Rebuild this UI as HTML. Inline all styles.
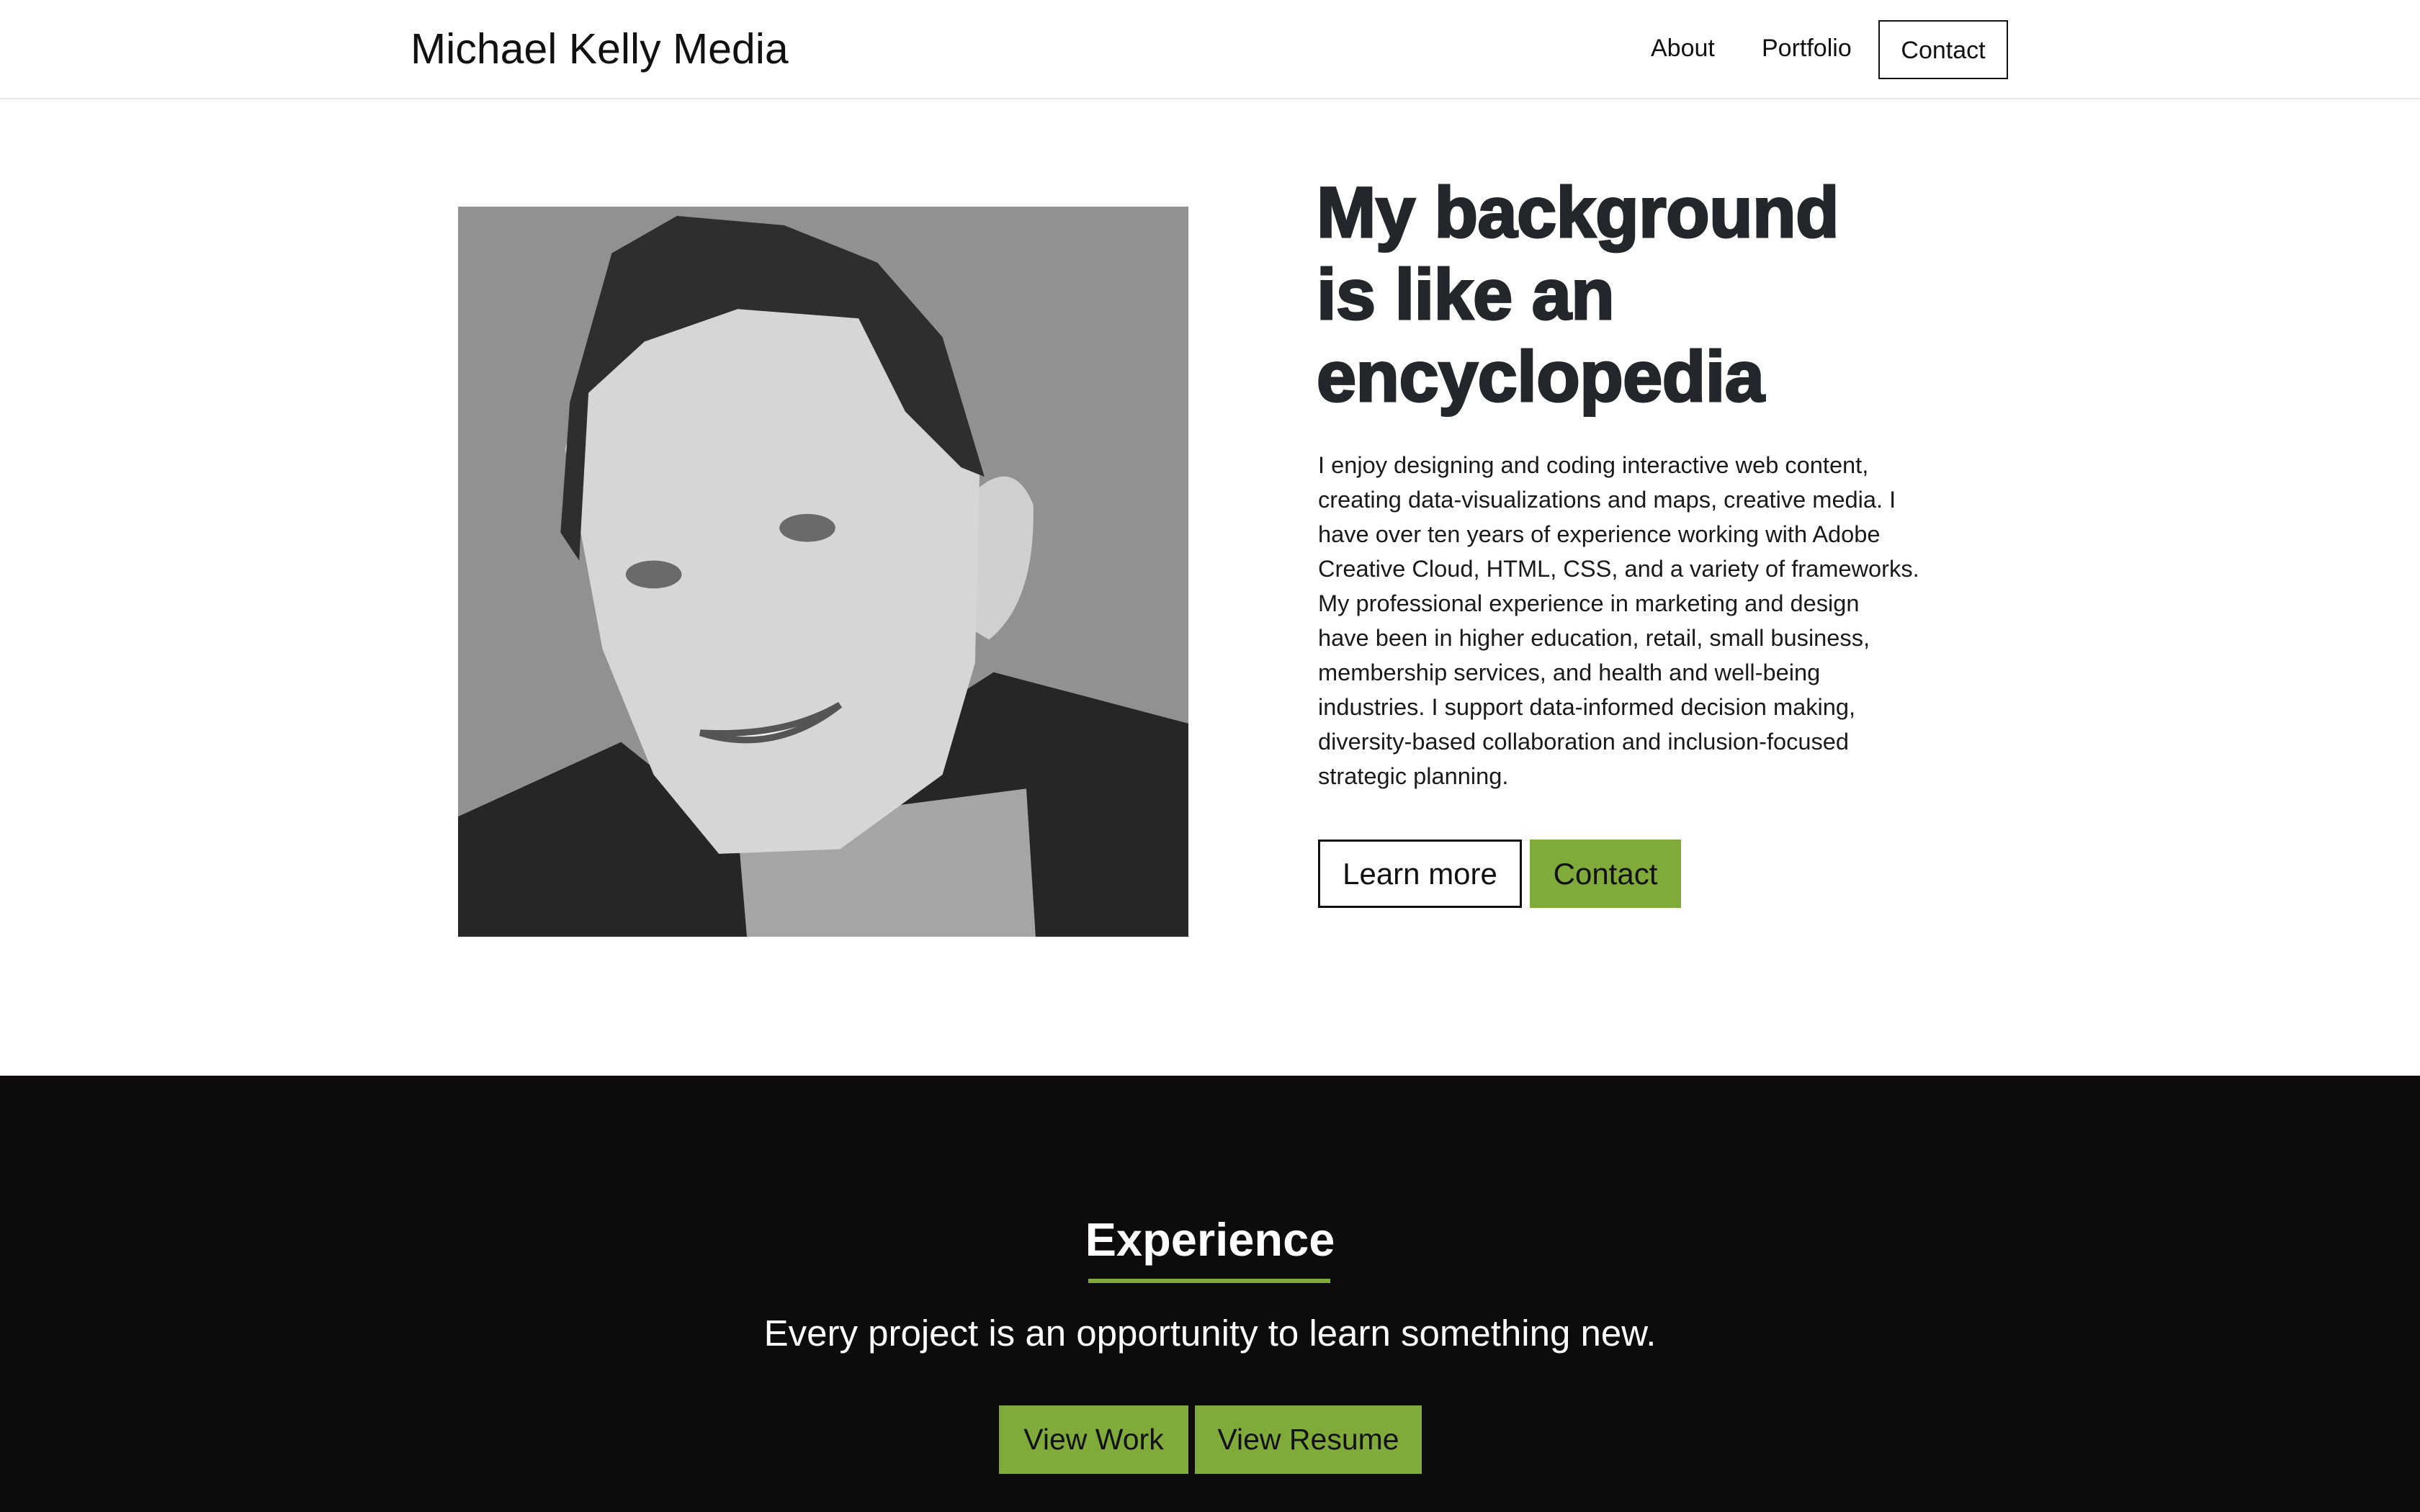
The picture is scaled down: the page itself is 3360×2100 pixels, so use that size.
<!DOCTYPE html>
<html><head><meta charset="utf-8"><style>
*{margin:0;padding:0;box-sizing:border-box}
html,body{width:3360px;height:2100px;overflow:hidden;background:#fff;font-family:"Liberation Sans",sans-serif;color:#111}
header{position:absolute;left:0;top:0;width:3360px;height:138px;border-bottom:2px solid #e8e8e8}
.logo{position:absolute;left:570px;top:34px;font-size:59px;color:#111}
.nav{position:absolute;font-size:34px;top:48px}
.cbtn{position:absolute;left:2608px;top:28px;width:180px;height:82px;border:2px solid #111;font-size:34px;text-align:center;line-height:80px}
.photo{position:absolute;left:636px;top:287px;width:1014px;height:1014px}
h1{position:absolute;left:1828px;top:238px;font-size:99px;line-height:114px;font-weight:900;color:#23262b;letter-spacing:-0.5px;-webkit-text-stroke:3px #23262b}
.para{position:absolute;left:1830px;top:622px;font-size:32.6px;line-height:48px;color:#1a1a1a}
.b1{position:absolute;left:1830px;top:1166px;width:283px;height:95px;border:3px solid #111;font-size:42px;text-align:center;line-height:89px}
.b2{position:absolute;left:2124px;top:1166px;width:210px;height:95px;background:#80ab3b;font-size:42px;text-align:center;line-height:95px}
.dark{position:absolute;left:0;top:1494px;width:3360px;height:606px;background:#0d0b0c}
.exp{position:absolute;left:0;width:3360px;top:1684px;text-align:center;color:#fff;font-size:65px;font-weight:bold}
.ul{position:absolute;left:1511px;top:1776px;width:336px;height:6px;background:#80ab3b}
.sub{position:absolute;left:0;width:3360px;top:1822px;text-align:center;color:#fff;font-size:51px}
.g{position:absolute;top:1952px;height:95px;background:#80ab3b;font-size:41px;text-align:center;line-height:95px;color:#111}
</style></head><body>
<header>
<div class="logo">Michael Kelly Media</div>
<div class="nav" style="left:2292px">About</div>
<div class="nav" style="left:2446px">Portfolio</div>
<div class="cbtn">Contact</div>
</header>
<svg class="photo" viewBox="0 0 1568 1568" preserveAspectRatio="none">
<rect width="1568" height="1568" fill="#919191"/>
<path d="M0 1310 L350 1150 L600 1350 L1150 1000 L1568 1110 L1568 1568 L0 1568Z" fill="#262626"/>
<path d="M600 1330 L1220 1250 L1240 1568 L620 1568Z" fill="#a5a5a5"/>
<path d="M1100 620 Q1190 530 1235 640 Q1240 850 1140 930 L1090 900Z" fill="#d0d0d0"/>
<path d="M230 520 L300 280 L650 170 L980 280 L1120 560 L1110 980 L1040 1220 L820 1380 L560 1390 L420 1220 L310 950 Z" fill="#d6d6d6"/>
<path d="M220 700 L240 420 L330 100 L470 20 L700 40 L900 120 L1040 280 L1130 580 L1080 560 L960 440 L860 240 L600 220 L400 290 L280 400 L260 760Z" fill="#2e2e2e"/>
<ellipse cx="420" cy="790" rx="60" ry="30" fill="#6a6a6a"/>
<ellipse cx="750" cy="690" rx="60" ry="30" fill="#6a6a6a"/>
<path d="M520 1130 Q680 1180 820 1070 Q700 1140 520 1130Z" fill="#f2f2f2" stroke="#555" stroke-width="14"/>
</svg>
<h1>My background<br>is like an<br>encyclopedia</h1>
<div class="para">I enjoy designing and coding interactive web content,<br>creating data-visualizations and maps, creative media. I<br>have over ten years of experience working with Adobe<br>Creative Cloud, HTML, CSS, and a variety of frameworks.<br>My professional experience in marketing and design<br>have been in higher education, retail, small business,<br>membership services, and health and well-being<br>industries. I support data-informed decision making,<br>diversity-based collaboration and inclusion-focused<br>strategic planning.</div>
<div class="b1">Learn more</div>
<div class="b2">Contact</div>
<div class="dark"></div>
<div class="exp">Experience</div>
<div class="ul"></div>
<div class="sub">Every project is an opportunity to learn something new.</div>
<div class="g" style="left:1387px;width:263px">View Work</div>
<div class="g" style="left:1659px;width:315px">View Resume</div>
</body></html>
